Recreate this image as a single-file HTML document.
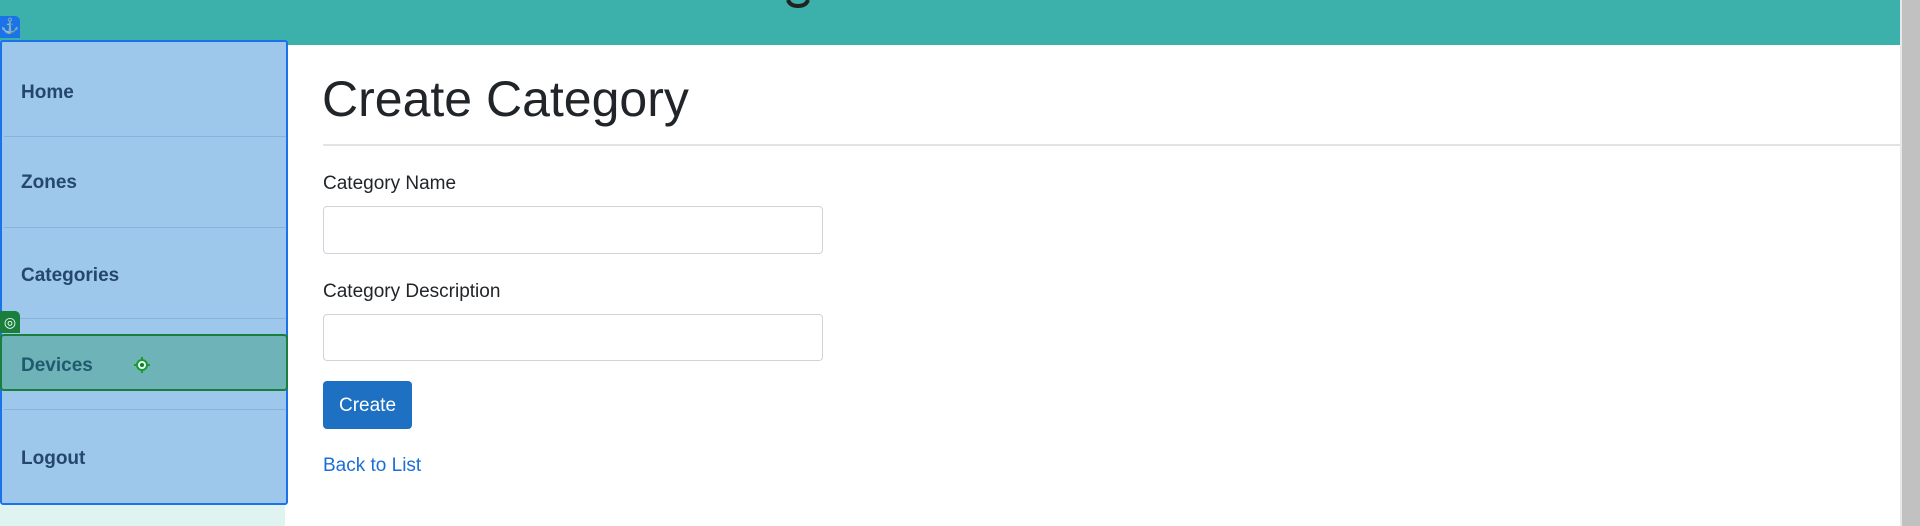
<!DOCTYPE html>
<html><head><meta charset="utf-8"><style>
*{box-sizing:border-box;margin:0;padding:0}
body{width:1920px;height:526px;overflow:hidden;background:#fff;font-family:"Liberation Sans",sans-serif;position:relative;color:#212529}
.hdr{position:absolute;left:0;top:0;width:1900px;height:45px;background:#3cb0aa}
.sb1{position:absolute;left:1900px;top:0;width:2px;height:526px;background:#e8e8e8}
.sb2{position:absolute;left:1902px;top:0;width:18px;height:526px;background:#c1c1c1}
.under{position:absolute;left:0;top:505px;width:285px;height:21px;background:#dff3f0}
.side{position:absolute;left:0;top:40px;width:288px;height:465px;background:#9dc8ec;border:2px solid #1a73e8;border-radius:3px}
.sep{position:absolute;left:2px;width:282px;height:1px;background:#85b3d9}
.item{position:absolute;left:21px;font-size:19px;font-weight:bold;color:#24476b;transform:translateY(-50%)}
.dev{position:absolute;left:0;top:334px;width:288px;height:57px;background:#6db3b8;border:2px solid #1a7f3c;border-radius:4px}
.badge{position:absolute;left:0;width:20px;height:22px;border-radius:0 5px 0 0;color:#fff;font-size:15px;text-align:center;line-height:22px}
h1{position:absolute;left:322px;top:69px;font-size:50px;font-weight:normal;line-height:60px}
.hr{position:absolute;left:323px;top:144px;width:1577px;height:2px;background:#e3e3e3}
.lbl{position:absolute;left:323px;font-size:19px;transform:translateY(-50%)}
.inp{position:absolute;left:323px;width:500px;height:48px;border:1px solid #ced4da;border-radius:4px}
.btn{position:absolute;left:323px;top:381px;width:89px;height:48px;background:#1d70c2;border-radius:4px;color:#fff;font-size:19px;text-align:center;line-height:50px}
.lnk{position:absolute;left:323px;top:466px;font-size:19px;color:#1a6fd6;transform:translateY(-50%)}
</style></head><body>
<div class="hdr"></div>
<svg style="position:absolute;left:784px;top:0" width="30" height="8"><path d="M4 0 Q6 6 14 6 Q22 6 24 0" stroke="#222" stroke-width="4" fill="none"/></svg>
<div class="sb1"></div><div class="sb2"></div>
<div class="under"></div>
<div class="side">
<div class="sep" style="top:94px"></div>
<div class="sep" style="top:185px"></div>
<div class="sep" style="top:276px"></div>
<div class="sep" style="top:367px"></div>
</div>
<div class="dev"></div>
<div class="item" style="top:93px">Home</div>
<div class="item" style="top:183px">Zones</div>
<div class="item" style="top:276px">Categories</div>
<div class="item" style="top:366px;color:#1f5a6e">Devices</div>
<div class="item" style="top:459px">Logout</div>
<svg style="position:absolute;left:134px;top:357px" width="16" height="16"><circle cx="8" cy="8" r="5" fill="#dff" stroke="#1a9a2a" stroke-width="2"/><circle cx="8" cy="8" r="2" fill="#1a7a20"/><path d="M8 0v3M8 13v3M0 8h3M13 8h3" stroke="#1a9a2a" stroke-width="2"/></svg>
<div class="badge" style="top:16px;background:#1a73e8">⚓</div>
<div class="badge" style="top:311px;background:#1a7f3c;font-size:14px">◎</div>
<h1>Create Category</h1>
<div class="hr"></div>
<div class="lbl" style="top:184px">Category Name</div>
<div class="inp" style="top:206px"></div>
<div class="lbl" style="top:292px">Category Description</div>
<div class="inp" style="top:314px;height:47px"></div>
<div class="btn">Create</div>
<div class="lnk">Back to List</div>
</body></html>
